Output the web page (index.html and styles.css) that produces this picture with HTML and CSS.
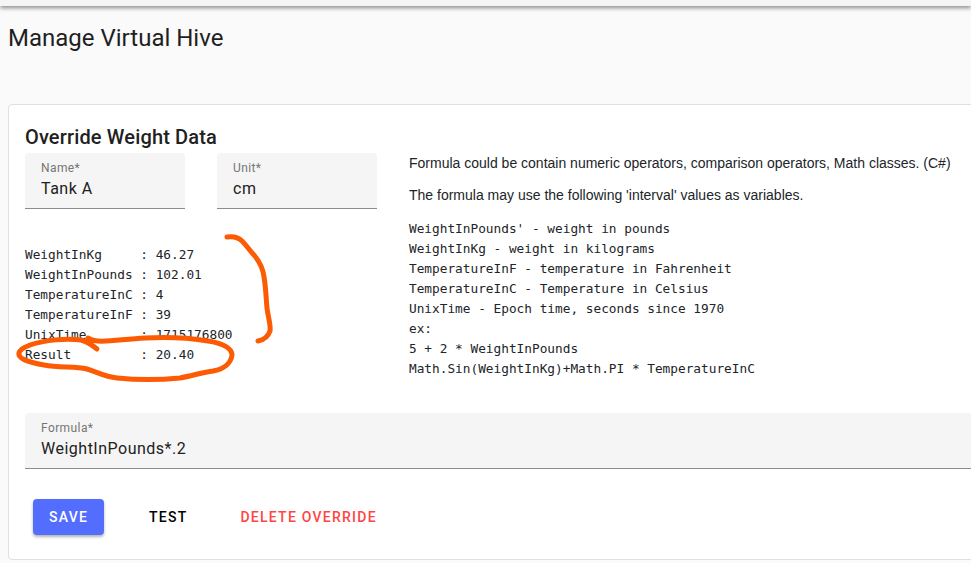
FILE: index.html
```html
<!DOCTYPE html>
<html lang="en">
<head>
<meta charset="utf-8">
<title>Manage Virtual Hive</title>
<link rel="stylesheet" href="styles.css">
</head>
<body>
<div class="topbar"></div>
<main class="page">
  <h1 class="page-title">Manage Virtual Hive</h1>
  <section class="card">
    <h2 class="card-title">Override Weight Data</h2>
    <div class="columns">
      <div class="left">
        <div class="field-row">
          <div class="field"><span class="field-label">Name*</span><span class="field-value">Tank A</span></div>
          <div class="field"><span class="field-label">Unit*</span><span class="field-value">cm</span></div>
        </div>
        <pre class="mono values">WeightInKg     : 46.27
WeightInPounds : 102.01
TemperatureInC : 4
TemperatureInF : 39
UnixTime       : 1715176800
Result         : 20.40</pre>
      </div>
      <div class="right">
        <p class="help">Formula could be contain numeric operators, comparison operators, Math classes. (C#)</p>
        <p class="help">The formula may use the following 'interval' values as variables.</p>
        <pre class="mono docs">WeightInPounds' - weight in pounds
WeightInKg - weight in kilograms
TemperatureInF - temperature in Fahrenheit
TemperatureInC - Temperature in Celsius
UnixTime - Epoch time, seconds since 1970
ex:
5 + 2 * WeightInPounds
Math.Sin(WeightInKg)+Math.PI * TemperatureInC</pre>
      </div>
    </div>
    <div class="field field-wide"><span class="field-label">Formula*</span><span class="field-value">WeightInPounds*.2</span></div>
    <div class="actions">
      <button class="btn btn-primary" type="button">Save</button>
      <button class="btn btn-test" type="button">Test</button>
      <button class="btn btn-danger" type="button">Delete Override</button>
    </div>
  </section>
</main>
<svg class="scribble" width="971" height="563" viewBox="0 0 971 563" aria-hidden="true">
  <path d="M227 237 C233 236 238 237 242 241 C247 246 250 251 254 255 C259 261 263 268 264 277 C266 288 266 298 267 308 C268 317 271 325 270 331 C268 337 263 340 258 341"/>
  <path d="M97 349 C92 345 88 342 81 340 C66 338 45 340 30 345 C22 348 18 351 19 355 C21 360 32 363 44 365 C60 368 75 366 87 369 C97 372 105 377 117 378 C137 380 160 380 180 378 C192 376 203 372 213 371 C224 369 231 363 232 355 C232 348 222 343 208 341 C190 338 165 337 145 338 C125 339 108 342 98 341 C93 341 90 339 88 338"/>
</svg>
</body>
</html>
```

FILE: styles.css
```css
* { box-sizing: border-box; }
html, body { margin: 0; height: 100%; overflow: hidden; }
body {
  position: relative;
  background: #fafafa;
  color: #212121;
  font-family: Roboto, "Liberation Sans", sans-serif;
}
.topbar {
  height: 6px;
  background: #f5f5f5;
  box-shadow: 0 2px 4px rgba(0, 0, 0, .45);
}
.page { padding: 0 0 0 8px; width: 1100px; }
.page-title {
  margin: 16px 0 0;
  font-size: 24px;
  line-height: 32px;
  font-weight: 400;
  color: #1f1f1f;
}
.card {
  margin-top: 50px;
  height: 456px;
  padding: 20px 16px 0;
  background: #fff;
  border: 1px solid #e0e0e0;
  border-radius: 4px;
}
.card-title {
  margin: 0;
  font-size: 20px;
  line-height: 24px;
  font-weight: 500;
  letter-spacing: .15px;
  color: #212121;
}
.columns { display: flex; gap: 32px; height: 260px; margin-top: 4px; }
.left { width: 352px; }
.field-row { display: flex; gap: 32px; }
.field {
  display: flex;
  flex-direction: column;
  width: 160px;
  height: 56px;
  padding: 8px 16px 0;
  background: #f5f5f5;
  border-bottom: 1px solid #8c8c8c;
  border-radius: 4px 4px 0 0;
}
.field-label { font-size: 12px; line-height: 14px; color: #757575; letter-spacing: .4px; }
.field-value { font-size: 16px; line-height: 24px; color: #212121; margin-top: 2px; letter-spacing: .5px; }
.field-wide { width: 100%; }
.mono {
  margin: 0;
  font-family: "DejaVu Sans Mono", "Liberation Mono", monospace;
  font-size: 12.77px;
  line-height: 20px;
  color: #212529;
}
.values { margin-top: 36px; }
.right { flex: 1; }
.help {
  margin: 0 0 12px;
  font-family: "Liberation Sans", Arial, sans-serif;
  font-size: 14px;
  line-height: 20px;
  color: #212529;
}
.docs { margin-top: 14px; }
.actions { display: flex; align-items: center; margin-top: 30px; padding-left: 8px; }
.btn {
  height: 36px;
  padding: 0 16px;
  border: 0;
  border-radius: 4px;
  background: transparent;
  font-family: Roboto, "Liberation Sans", sans-serif;
  font-size: 14px;
  font-weight: 500;
  letter-spacing: 1.25px;
  text-transform: uppercase;
}
.btn-primary {
  width: 71px;
  background: #536dfe;
  color: #fff;
  box-shadow: 0 2px 3px rgba(0, 0, 0, .3);
}
.btn-test { margin-left: 29px; color: #000; }
.btn-danger { margin-left: 21px; color: #ff4444; }
.scribble {
  position: absolute;
  top: 0;
  left: 0;
  pointer-events: none;
}
.scribble path {
  fill: none;
  stroke: #fc5a03;
  stroke-width: 5;
  stroke-linecap: round;
  stroke-linejoin: round;
}
```
